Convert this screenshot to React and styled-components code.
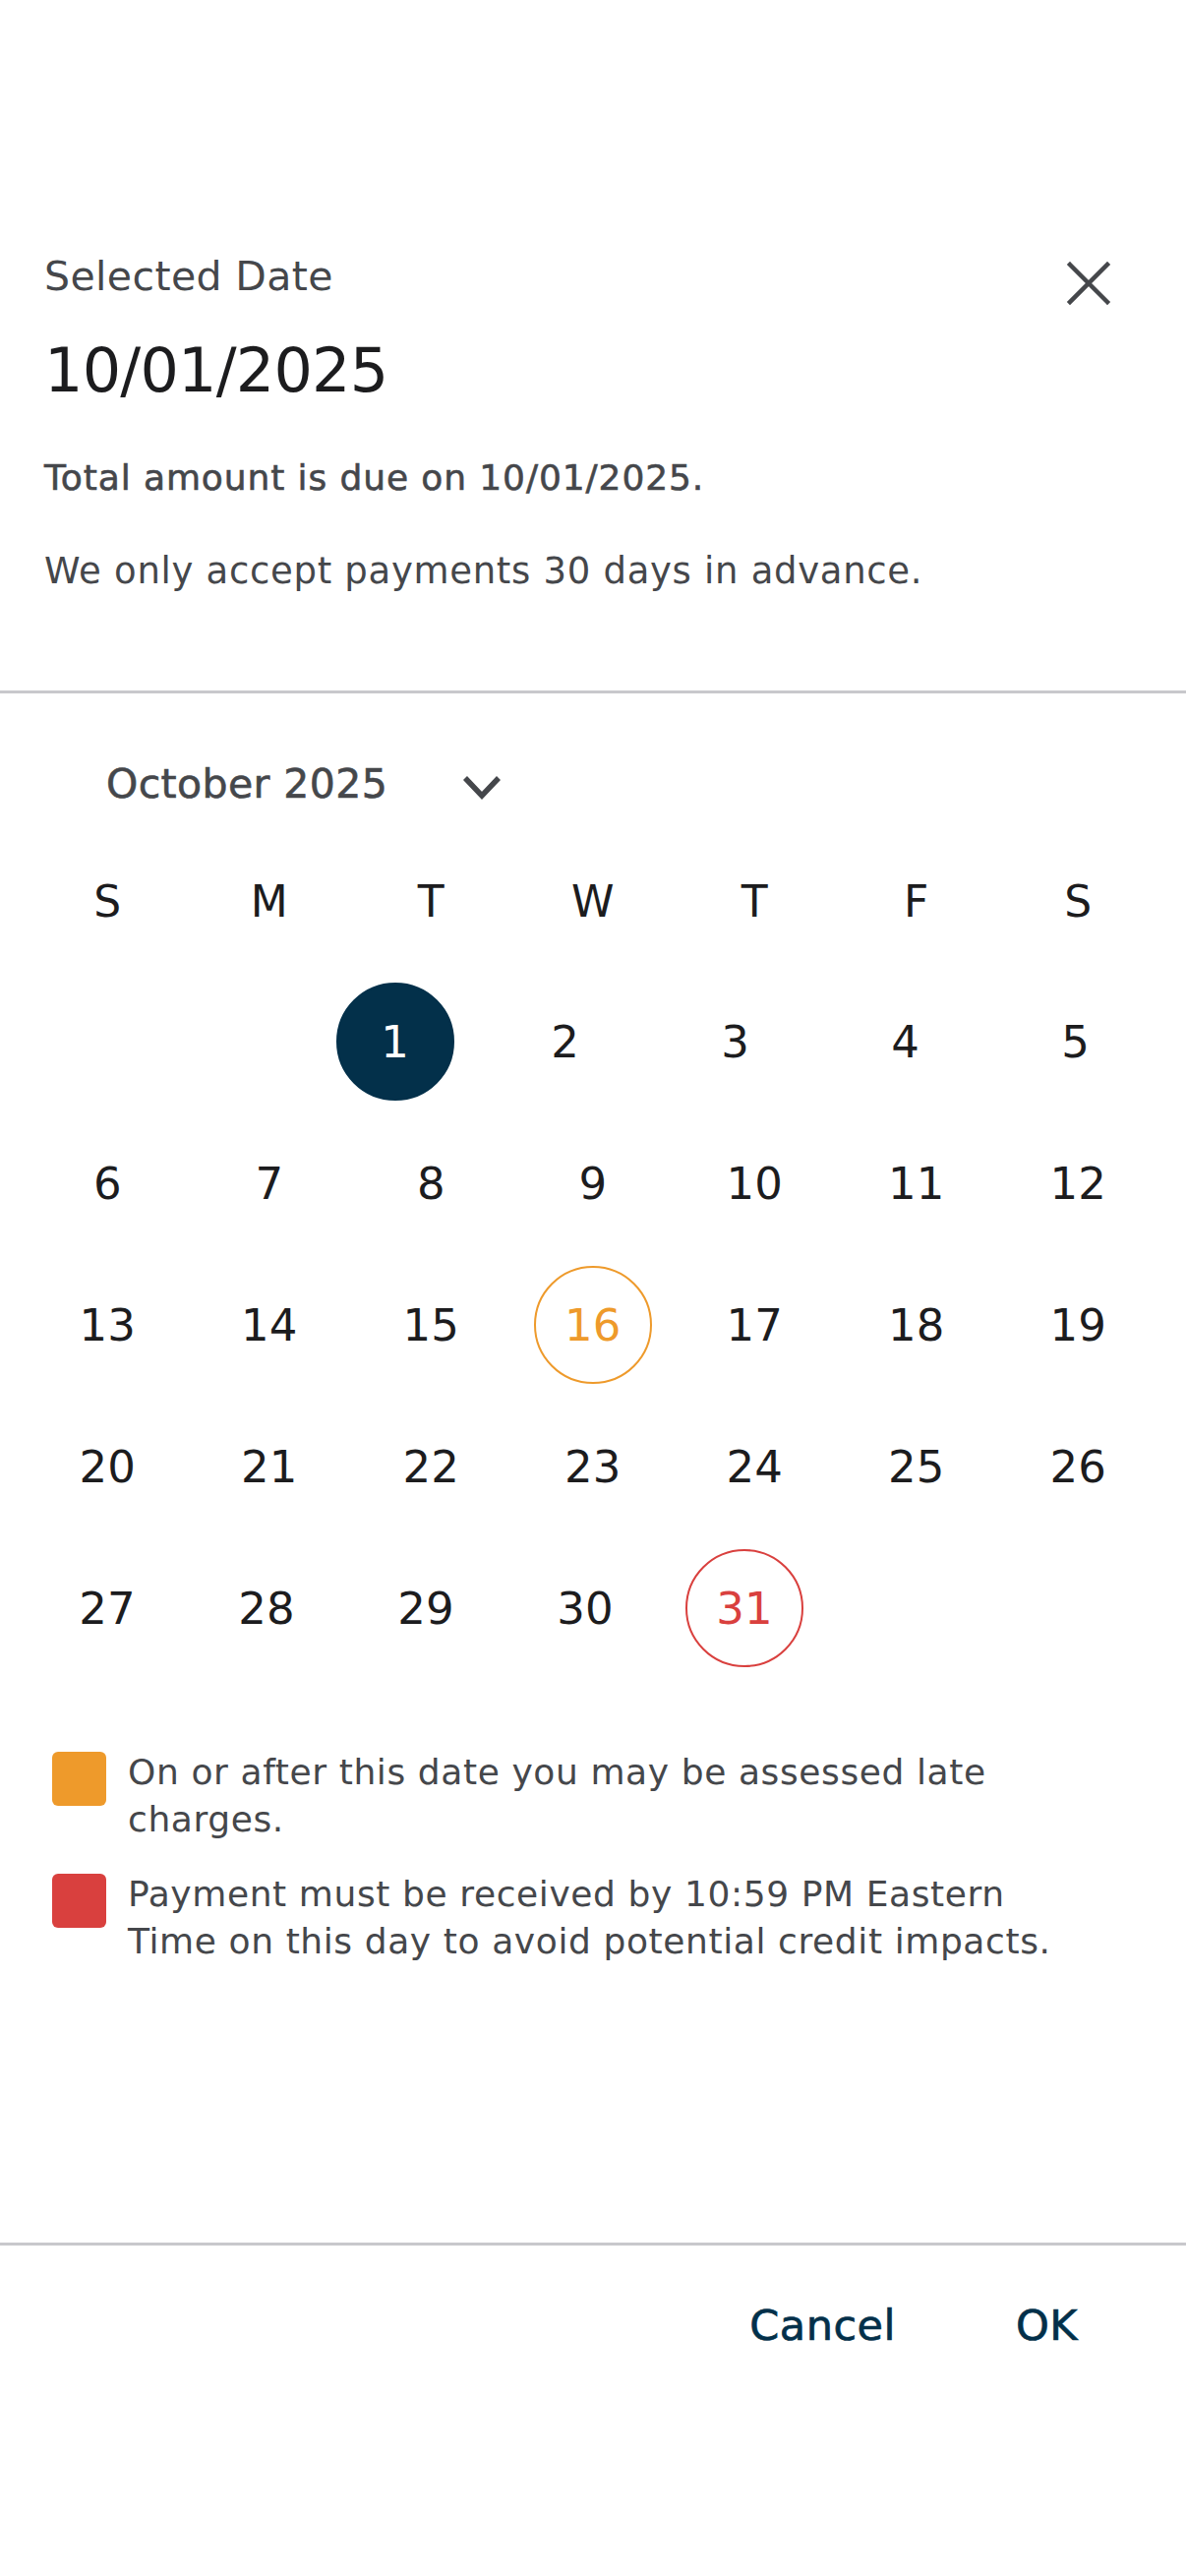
import React from 'react';
import styled, { createGlobalStyle } from 'styled-components';

const GlobalStyle = createGlobalStyle`
    html, body {
        margin: 0;
        padding: 0;
        background: #fff;
    }
    body {
        font-family: "DejaVu Sans", "Open Sans", sans-serif;
        color: #1c1c1e;
    }
`;

const NAVY = '#03304a';
const ORANGE = '#ee9a2b';
const RED = '#d9403e';
const GREY_TEXT = '#45474b';

// weeks of October 2025; start/step place the cells of each row
const WEEKS = [
    { start: 315, step: 173, days: [1, 2, 3, 4, 5] },
    { start: 27, step: 164.5, days: [6, 7, 8, 9, 10, 11, 12] },
    { start: 27, step: 164.5, days: [13, 14, 15, 16, 17, 18, 19] },
    { start: 27, step: 164.5, days: [20, 21, 22, 23, 24, 25, 26] },
    { start: 28, step: 162, days: [27, 28, 29, 30, 31] },
];

const MARKS = {
    1: 'selected',
    16: 'late',
    31: 'due',
};

const CloseIcon = () => (
    <svg width="46" height="46" viewBox="0 0 46 46">
        <path d="M4 4 L42 42 M42 4 L4 42" stroke={GREY_TEXT} strokeWidth="4.5" strokeLinecap="square" />
    </svg>
);

const ChevronIcon = () => (
    <svg width="40" height="26" viewBox="0 0 40 26">
        <path d="M3 3 L20 21 L37 3" stroke={GREY_TEXT} strokeWidth="5.5" fill="none" />
    </svg>
);

const DatePickerDialog = () => {
    return (
        <Dialog>
            <Header>
                <TitleRow>
                    <Label>Selected Date</Label>
                    <CloseButton aria-label="Close">
                        <CloseIcon />
                    </CloseButton>
                </TitleRow>
                <BigDate>10/01/2025</BigDate>
                <DueNote>Total amount is due on 10/01/2025.</DueNote>
                <Hint>We only accept payments 30 days in advance.</Hint>
            </Header>

            <Divider />

            <Calendar>
                <MonthRow>
                    <MonthLabel>October 2025</MonthLabel>
                    <ChevronWrap>
                        <ChevronIcon />
                    </ChevronWrap>
                </MonthRow>

                <WeekdayRow>
                    {['S', 'M', 'T', 'W', 'T', 'F', 'S'].map((d, i) => (
                        <Weekday key={i}>{d}</Weekday>
                    ))}
                </WeekdayRow>

                <Weeks>
                    {WEEKS.map((week, i) => (
                        <Week key={i} $start={week.start} $step={week.step}>
                            {week.days.map((day) => (
                                <Day key={day} $mark={MARKS[day]}>
                                    {day}
                                </Day>
                            ))}
                        </Week>
                    ))}
                </Weeks>
            </Calendar>

            <Legend>
                <LegendItem>
                    <Swatch $color={ORANGE} />
                    <LegendText>
                        On or after this date you may be assessed late
                        <br />
                        charges.
                    </LegendText>
                </LegendItem>
                <LegendItem>
                    <Swatch $color={RED} />
                    <LegendText>
                        Payment must be received by 10:59 PM Eastern
                        <br />
                        Time on this day to avoid potential credit impacts.
                    </LegendText>
                </LegendItem>
            </Legend>

            <FooterDivider />

            <Actions>
                <TextButton>Cancel</TextButton>
                <TextButton>OK</TextButton>
            </Actions>
        </Dialog>
    );
};

const Dialog = styled.div`
    width: 1206px;
    min-height: 2619px;
    background: #fff;
    display: flex;
    flex-direction: column;
`;

const Header = styled.div`
    display: flex;
    flex-direction: column;
    padding: 251px 45px 0 45px;
`;

const TitleRow = styled.div`
    display: flex;
    justify-content: space-between;
    align-items: center;
`;

const Label = styled.div`
    font-size: 41px;
    line-height: 54px;
    color: ${GREY_TEXT};
    letter-spacing: 0.4px;
`;

const CloseButton = styled.button`
    border: none;
    background: none;
    padding: 0;
    margin-right: 31px;
    margin-top: 14px;
    display: flex;
    cursor: pointer;
`;

const BigDate = styled.div`
    margin-top: 21px;
    font-size: 62px;
    line-height: 90px;
    letter-spacing: -0.8px;
    color: #1c1c1e;
`;

const DueNote = styled.div`
    margin-top: 40px;
    font-size: 36px;
    line-height: 48px;
    color: ${GREY_TEXT};
    letter-spacing: 0.9px;
    -webkit-text-stroke: 0.6px ${GREY_TEXT};
`;

const Hint = styled.div`
    margin-top: 47px;
    font-size: 37px;
    line-height: 48px;
    color: ${GREY_TEXT};
    letter-spacing: 0.7px;
`;

const Divider = styled.div`
    margin-top: 97px;
    height: 3px;
    background: #c8c8cc;
`;

const Calendar = styled.div`
    display: flex;
    flex-direction: column;
`;

const MonthRow = styled.div`
    margin-top: 64px;
    display: flex;
    align-items: center;
    padding-left: 108px;
    height: 56px;
`;

const MonthLabel = styled.div`
    font-size: 41px;
    line-height: 56px;
    letter-spacing: 0.4px;
    color: ${GREY_TEXT};
    -webkit-text-stroke: 0.6px ${GREY_TEXT};
`;

const ChevronWrap = styled.span`
    display: flex;
    margin-left: 76px;
    margin-top: 8px;
`;

const WeekdayRow = styled.div`
    margin-top: 62px;
    display: grid;
    grid-template-columns: repeat(7, 164.5px);
    padding-left: 27px;
    height: 60px;
    align-items: center;
`;

const Weekday = styled.div`
    text-align: center;
    font-size: 44px;
    line-height: 60px;
    color: #1c1c1e;
`;

const Weeks = styled.div`
    margin-top: 40px;
    display: flex;
    flex-direction: column;
`;

const Week = styled.div`
    display: grid;
    grid-template-columns: repeat(7, ${(p) => p.$step}px);
    padding-left: ${(p) => p.$start}px;
    height: 144px;
    align-items: center;
`;

const markStyles = {
    selected: `background: ${NAVY}; color: #fff; border-color: ${NAVY};`,
    late: `color: ${ORANGE}; border-color: ${ORANGE};`,
    due: `color: ${RED}; border-color: ${RED};`,
};

const Day = styled.div`
    justify-self: center;
    width: 120px;
    height: 120px;
    box-sizing: border-box;
    border-radius: 50%;
    border: 2.5px solid transparent;
    display: flex;
    align-items: center;
    justify-content: center;
    font-size: 45px;
    color: #1c1c1e;
    ${(p) => (p.$mark ? markStyles[p.$mark] : '')}
`;

const Legend = styled.div`
    margin-top: 71px;
    padding: 0 20px 0 53px;
    display: flex;
    flex-direction: column;
    gap: 28px;
`;

const LegendItem = styled.div`
    display: flex;
    align-items: flex-start;
    gap: 22px;
`;

const Swatch = styled.div`
    flex: none;
    width: 55px;
    height: 55px;
    margin-top: 3px;
    border-radius: 6px;
    background: ${(p) => p.$color};
`;

const LegendText = styled.div`
    flex: 1;
    font-size: 36px;
    line-height: 48px;
    color: ${GREY_TEXT};
    letter-spacing: 0.6px;
`;

const FooterDivider = styled.div`
    margin-top: 282px;
    height: 3px;
    background: #c8c8cc;
`;

const Actions = styled.div`
    margin-top: 53px;
    display: flex;
    justify-content: flex-end;
    gap: 122px;
    padding-right: 110px;
`;

const TextButton = styled.button`
    border: none;
    background: none;
    padding: 0;
    font-family: inherit;
    font-size: 43px;
    line-height: 56px;
    letter-spacing: 0.5px;
    color: ${NAVY};
    -webkit-text-stroke: 0.7px ${NAVY};
    cursor: pointer;
`;

const App = () => (
    <>
        <GlobalStyle />
        <DatePickerDialog />
    </>
);

export default App;
